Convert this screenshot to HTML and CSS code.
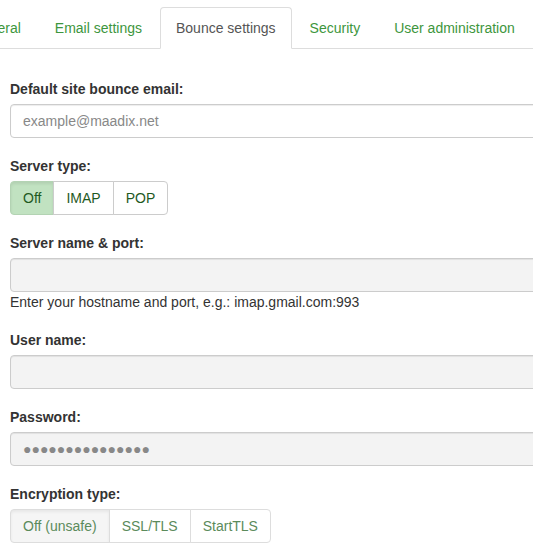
FILE: index.html
```html
<!DOCTYPE html>
<html>
<head>
<meta charset="utf-8">
<link rel="stylesheet" href="styles.css">
</head>
<body>
<div class="page">
  <ul class="tabs">
    <li class="tab"><a>General</a></li>
    <li class="tab"><a>Email settings</a></li>
    <li class="tab active"><a>Bounce settings</a></li>
    <li class="tab"><a>Security</a></li>
    <li class="tab"><a>User administration</a></li>
  </ul>
  <form class="content">
    <div class="group">
      <label class="label">Default site bounce email:</label>
      <input class="input" type="text" placeholder="example@maadix.net">
    </div>
    <div class="group">
      <label class="label">Server type:</label>
      <div class="btn-group">
        <span class="btn on">Off</span><span class="btn">IMAP</span><span class="btn">POP</span>
      </div>
    </div>
    <div class="group">
      <label class="label">Server name &amp; port:</label>
      <input class="input" type="text" disabled>
      <div class="help">Enter your hostname and port, e.g.: imap.gmail.com:993</div>
    </div>
    <div class="group">
      <label class="label">User name:</label>
      <input class="input" type="text" disabled>
    </div>
    <div class="group">
      <label class="label">Password:</label>
      <div class="input disabled pw">●●●●●●●●●●●●●●●</div>
    </div>
    <div class="group">
      <label class="label">Encryption type:</label>
      <div class="btn-group muted">
        <span class="btn sel">Off (unsafe)</span><span class="btn">SSL/TLS</span><span class="btn">StartTLS</span>
      </div>
    </div>
  </form>
</div>
</body>
</html>
```
FILE: styles.css
```css
html, body {
  margin: 0;
  padding: 0;
  overflow: hidden;
  background: #fff;
}
body {
  font-family: "Liberation Sans", Arial, sans-serif;
  font-size: 14px;
  line-height: 20px;
  color: #333;
}
.page {
  padding-top: 7px;
  width: 600px;
}
.tabs {
  list-style: none;
  margin: 0 0 0 -45px;
  padding: 0;
  display: flex;
  width: 578px;
  border-bottom: 1px solid #ddd;
}
.tab {
  margin-right: 2px;
  margin-bottom: -1px;
  flex-shrink: 0;
  white-space: nowrap;
}
.tab a {
  display: block;
  padding: 10px 15px;
  border: 1px solid transparent;
  border-radius: 4px 4px 0 0;
  color: #3d963d;
  line-height: 20px;
}
.tab.active a {
  color: #555;
  background: #fff;
  border-color: #ddd #ddd transparent #ddd;
}
.content {
  padding: 30px 0 0 10px;
  margin: 0;
}
.group {
  margin-bottom: 18px;
}
.label {
  display: block;
  font-weight: bold;
  margin-bottom: 5px;
  color: #333;
}
.input {
  display: block;
  box-sizing: border-box;
  width: 560px;
  height: 34px;
  padding: 6px 12px;
  font-family: "Liberation Sans", Arial, sans-serif;
  font-size: 14px;
  line-height: 20px;
  color: #555;
  background: #fff;
  border: 1px solid #ccc;
  border-radius: 4px;
  box-shadow: inset 0 1px 1px rgba(0,0,0,.075);
  margin: 0;
}
.input::placeholder {
  color: #888;
}
.input:disabled,
.input.disabled {
  background: #f3f3f3;
}
.pw {
  color: #888;
  white-space: nowrap;
}
.help {
  margin-top: 0;
  color: #333;
}
.btn-group {
  display: inline-flex;
}
.btn {
  display: inline-block;
  padding: 6px 12px;
  line-height: 20px;
  border: 1px solid #ccc;
  background: #fff;
  color: #1f5a1f;
  margin-left: -1px;
}
.btn:first-child {
  margin-left: 0;
  border-radius: 4px 0 0 4px;
}
.btn:last-child {
  border-radius: 0 4px 4px 0;
}
.btn.on {
  background: #c1e2c1;
  border-color: #b3d3b3;
  box-shadow: inset 0 2px 3px rgba(0,0,0,.08);
}
.muted .btn {
  color: #5b8b5b;
  border-color: #ddd;
}
.muted .btn.sel {
  background: #f5f5f5;
  box-shadow: inset 0 2px 3px rgba(0,0,0,.06);
}
```
